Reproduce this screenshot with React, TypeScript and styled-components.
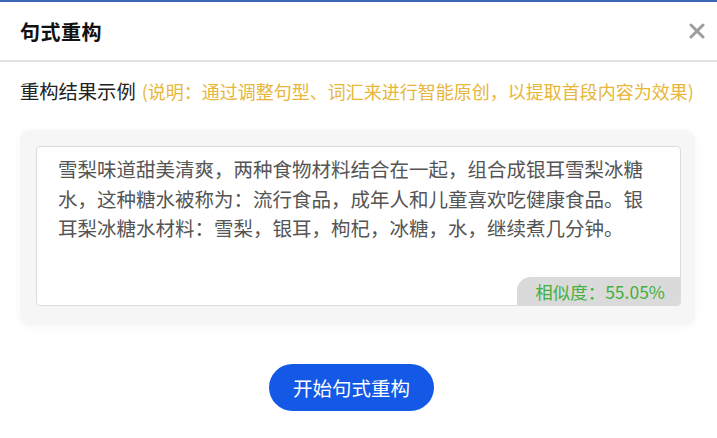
import React from 'react';
import styled, { createGlobalStyle } from 'styled-components';

const GlobalStyle = createGlobalStyle`
  html, body {
    margin: 0;
    padding: 0;
    background: #ffffff;
  }
  body {
    font-family: 'Noto Sans CJK SC', 'Noto Sans', 'Liberation Sans', sans-serif;
  }
`;

const Modal = styled.div`
  width: 717px;
  height: 438px;
  box-sizing: border-box;
  border-top: 2px solid #3d68b8;
  background: #fff;
  display: flex;
  flex-direction: column;
`;

const Header = styled.div`
  height: 58px;
  display: flex;
  align-items: center;
  justify-content: space-between;
  padding: 0 8px 0 20px;
  border-bottom: 2px solid #e0e0e0;
`;

const Title = styled.h2`
  margin: 0;
  font-size: 20px;
  font-weight: 700;
  color: #111;
  letter-spacing: 0.5px;
`;

const CloseButton = styled.button`
  border: none;
  background: transparent;
  padding: 0;
  width: 24px;
  height: 24px;
  display: flex;
  align-items: center;
  justify-content: center;
  cursor: pointer;
`;

const Body = styled.div`
  padding: 16px 22px 0 20px;
  display: flex;
  flex-direction: column;
`;

const Label = styled.div`
  font-size: 19.3px;
  line-height: 26px;
  color: #222;
  white-space: nowrap;
`;

const Hint = styled.span`
  color: #e8b63a;
  font-size: 18px;
  margin-left: 6px;
`;

const Panel = styled.div`
  margin-top: 26px;
  padding: 16px 14px 19px 16px;
  background: #f6f6f6;
  border-radius: 10px;
  box-shadow: 0 2px 10px rgba(0, 0, 0, 0.04);
`;

const ResultBox = styled.div`
  position: relative;
  height: 160px;
  box-sizing: border-box;
  background: #fff;
  border: 1px solid #dcdcdc;
  border-radius: 4px;
  padding: 7px 24px 0 21px;
  overflow: hidden;
`;

const ResultText = styled.p`
  margin: 0;
  font-size: 19.5px;
  line-height: 29.5px;
  color: #555;
`;

const Similarity = styled.div`
  position: absolute;
  right: 0;
  bottom: 0;
  height: 28px;
  padding: 0 15px 0 18px;
  display: flex;
  align-items: center;
  background: #dadada;
  border-radius: 14px 0 0 0;
  color: #42b13d;
  font-size: 17.5px;
`;

const Footer = styled.div`
  display: flex;
  justify-content: center;
  padding: 39px 14px 0 0;
`;

const PrimaryButton = styled.button`
  width: 165px;
  height: 47px;
  border: none;
  border-radius: 24px;
  background: #1458e6;
  color: #fff;
  font-family: inherit;
  font-size: 19.5px;
  cursor: pointer;
`;

export default function App() {
  return (
    <>
      <GlobalStyle />
      <Modal>
        <Header>
          <Title>句式重构</Title>
          <CloseButton aria-label="close">
            <svg width="16" height="16" viewBox="0 0 16 16">
              <path d="M2 2 L14 14 M14 2 L2 14" stroke="#9e9e9e" strokeWidth="3" strokeLinecap="round" />
            </svg>
          </CloseButton>
        </Header>
        <Body>
          <Label>
            重构结果示例
            <Hint>(说明：通过调整句型、词汇来进行智能原创，以提取首段内容为效果)</Hint>
          </Label>
          <Panel>
            <ResultBox>
              <ResultText>
                雪梨味道甜美清爽，两种食物材料结合在一起，组合成银耳雪梨冰糖水，这种糖水被称为：流行食品，成年人和儿童喜欢吃健康食品。银耳梨冰糖水材料：雪梨，银耳，枸杞，冰糖，水，继续煮几分钟。
              </ResultText>
              <Similarity>相似度：55.05%</Similarity>
            </ResultBox>
          </Panel>
        </Body>
        <Footer>
          <PrimaryButton>开始句式重构</PrimaryButton>
        </Footer>
      </Modal>
    </>
  );
}
